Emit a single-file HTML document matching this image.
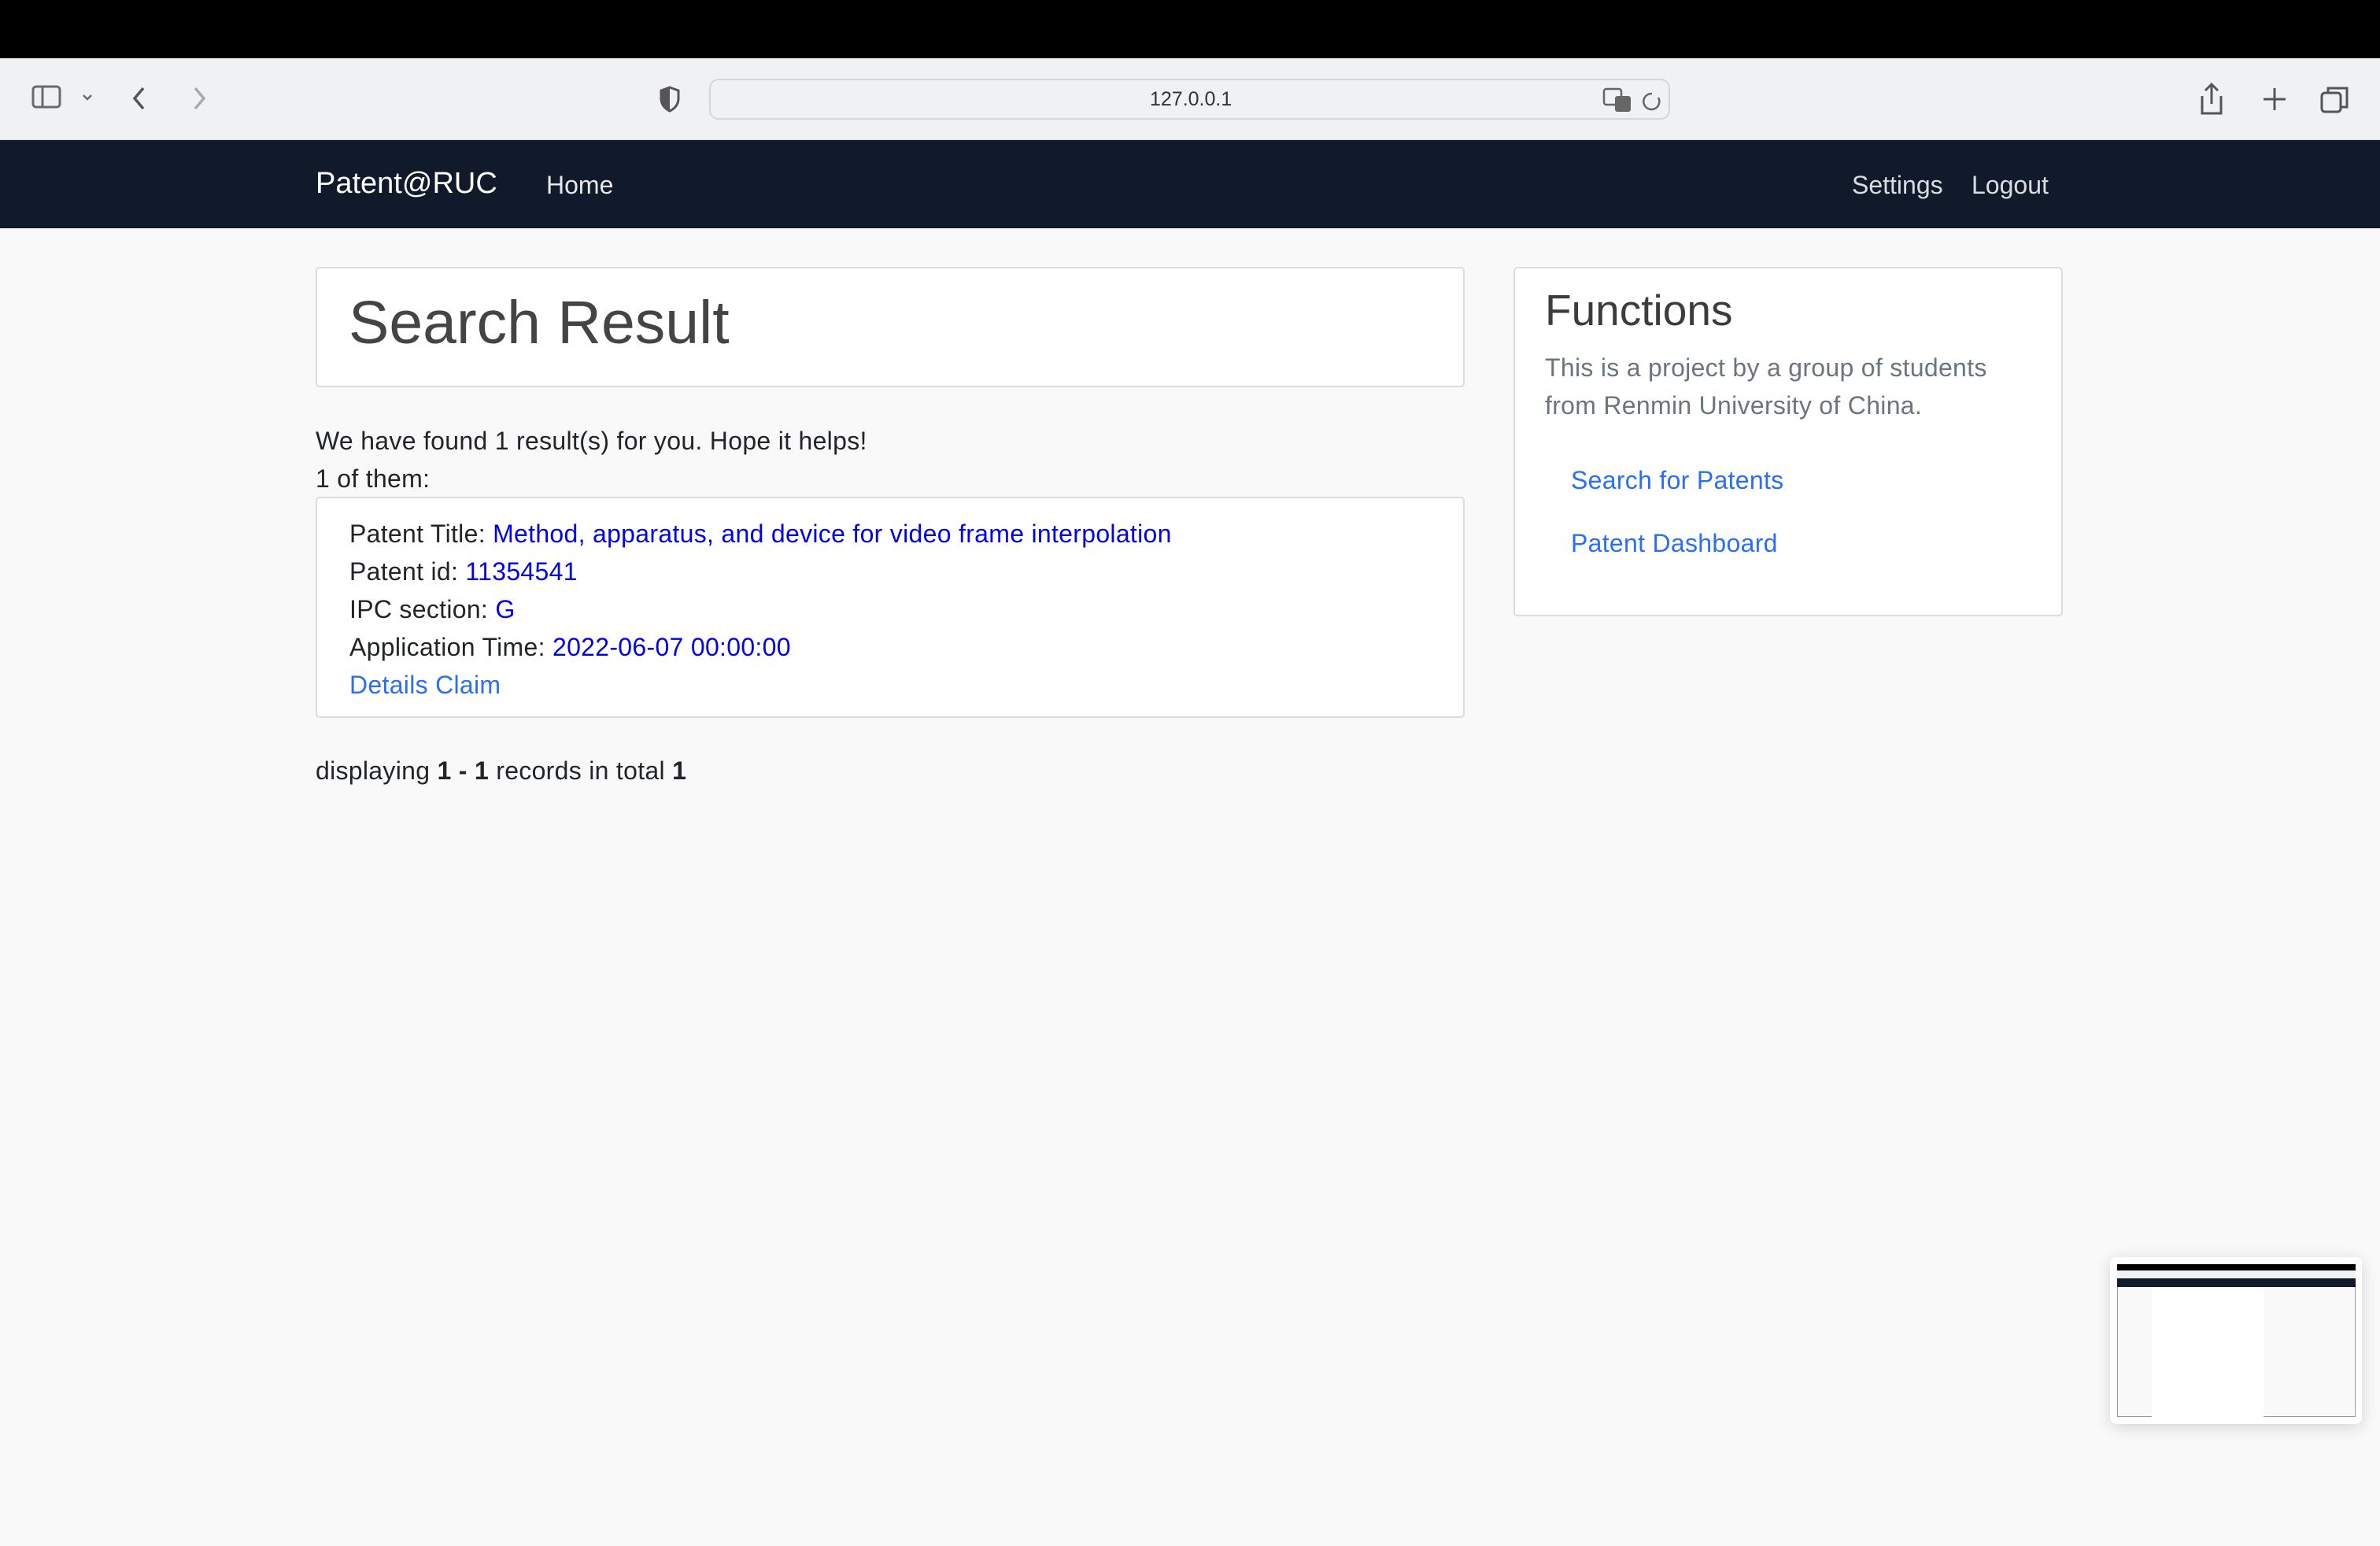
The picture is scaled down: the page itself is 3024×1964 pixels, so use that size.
<!DOCTYPE html>
<html><head><meta charset="utf-8"><style>
*{margin:0;padding:0;box-sizing:border-box}
body{width:3024px;height:1964px;background:#f9f9f9;font-family:"Liberation Sans",sans-serif;position:relative;overflow:hidden}
.a{position:absolute;white-space:nowrap}
.card{position:absolute;background:#fff;border:2px solid #dcdcdc;border-radius:5px}
.t{font-size:32px;color:#212529;line-height:48px;letter-spacing:0.3px}
.b{color:#0000ee}
.l{color:#2a6ef6}
</style></head><body>
<div class="a" style="left:0;top:0;width:3024px;height:74px;background:#000"></div>
<div class="a" style="left:0;top:74px;width:3024px;height:104px;background:#f0f1f3;border-bottom:1px solid #d8d8d8"></div>
<svg class="a" style="left:36px;top:104px" width="110" height="40" viewBox="0 0 110 40"><rect x="6" y="6" width="34" height="26" rx="4" fill="none" stroke="#6a6a6a" stroke-width="3"/><line x1="18" y1="6" x2="18" y2="32" stroke="#6a6a6a" stroke-width="3"/><path d="M70 17l5 5 5-5" fill="none" stroke="#6a6a6a" stroke-width="2.5"/></svg>
<svg class="a" style="left:166px;top:106px" width="100" height="40"><path d="M16 6L5 19l11 13" fill="none" stroke="#555" stroke-width="3.5"/><path d="M82 6l11 13-11 13" fill="none" stroke="#aaa" stroke-width="3.5"/></svg>
<svg class="a" style="left:836px;top:108px" width="30" height="36"><path d="M15 3l11 4v10c0 8-5 13-11 16C9 30 4 25 4 17V7z" fill="none" stroke="#555" stroke-width="3"/><path d="M15 3v30C9 30 4 25 4 17V7z" fill="#555"/></svg>
<div class="a" style="left:901px;top:100px;width:1221px;height:52px;background:#f0f1f3;border:2px solid #d6d6d8;border-radius:12px"></div>
<div class="a" style="left:1461px;top:112px;font-size:25px;color:#333">127.0.0.1</div>
<svg class="a" style="left:2035px;top:110px" width="80" height="36"><rect x="3" y="3" width="22" height="20" rx="3" fill="none" stroke="#666" stroke-width="2.5"/><rect x="17" y="12" width="20" height="20" rx="3" fill="#666"/><path d="M64 9a10 10 0 1 0 8 5" fill="none" stroke="#666" stroke-width="2.5"/></svg>
<svg class="a" style="left:2790px;top:102px" width="210" height="48"><path d="M20 6v24M12 13l8-8 8 8M8 20v22h24V20" fill="none" stroke="#555" stroke-width="3"/><path d="M100 10v28M86 24h28" stroke="#555" stroke-width="3"/><rect x="160" y="16" width="24" height="24" rx="4" fill="none" stroke="#555" stroke-width="3"/><path d="M168 16v-6h24v24h-8" fill="none" stroke="#555" stroke-width="3"/></svg>
<div class="a" style="left:0;top:178px;width:3024px;height:112px;background:#111a2a"></div>
<div class="a" style="left:401px;top:212px;font-size:38px;color:#fff">Patent@RUC</div>
<div class="a" style="left:694px;top:217px;font-size:32px;color:#e8e8e8">Home</div>
<div class="a" style="left:2353px;top:217px;font-size:32px;color:#d9dde3">Settings</div>
<div class="a" style="left:2505px;top:217px;font-size:32px;color:#d9dde3">Logout</div>
<div class="card" style="left:401px;top:339px;width:1460px;height:153px"></div>
<div class="a" style="left:443px;top:366px;font-size:77px;color:#444;font-weight:500">Search Result</div>
<div class="a t" style="left:401px;top:536px">We have found 1 result(s) for you. Hope it helps!</div>
<div class="a t" style="left:401px;top:584px">1 of them:</div>
<div class="card" style="left:401px;top:631px;width:1460px;height:281px"></div>
<div class="a t" style="left:444px;top:654px">Patent Title: <span class="b">Method, apparatus, and device for video frame interpolation</span></div>
<div class="a t" style="left:444px;top:702px">Patent id: <span class="b">11354541</span></div>
<div class="a t" style="left:444px;top:750px">IPC section: <span class="b">G</span></div>
<div class="a t" style="left:444px;top:798px">Application Time: <span class="b">2022-06-07 00:00:00</span></div>
<div class="a t l" style="left:444px;top:846px">Details Claim</div>
<div class="a t" style="left:401px;top:955px">displaying <b>1 - 1</b> records in total <b>1</b></div>
<div class="card" style="left:1923px;top:339px;width:698px;height:444px"></div>
<div class="a" style="left:1963px;top:362px;font-size:55px;color:#3c3c3c;font-weight:500">Functions</div>
<div class="a t" style="left:1963px;top:443px;color:#6c757d">This is a project by a group of students</div>
<div class="a t" style="left:1963px;top:491px;color:#6c757d">from Renmin University of China.</div>
<div class="a t l" style="left:1996px;top:586px">Search for Patents</div>
<div class="a t l" style="left:1996px;top:666px">Patent Dashboard</div>
<div class="a" style="left:2681px;top:1597px;width:320px;height:212px;background:#fff;border-radius:8px;box-shadow:0 4px 20px rgba(0,0,0,.15)"></div>
<div class="a" style="left:2690px;top:1606px;width:303px;height:194px;background:#f9f9f9;border:1px solid #999"></div>
<div class="a" style="left:2690px;top:1606px;width:303px;height:8px;background:#000"></div>
<div class="a" style="left:2690px;top:1614px;width:303px;height:10px;background:#f0f1f3"></div>
<div class="a" style="left:2690px;top:1624px;width:303px;height:11px;background:#111a2a"></div>
<div class="a" style="left:2734px;top:1635px;width:142px;height:165px;background:#fff"></div>
</body></html>
